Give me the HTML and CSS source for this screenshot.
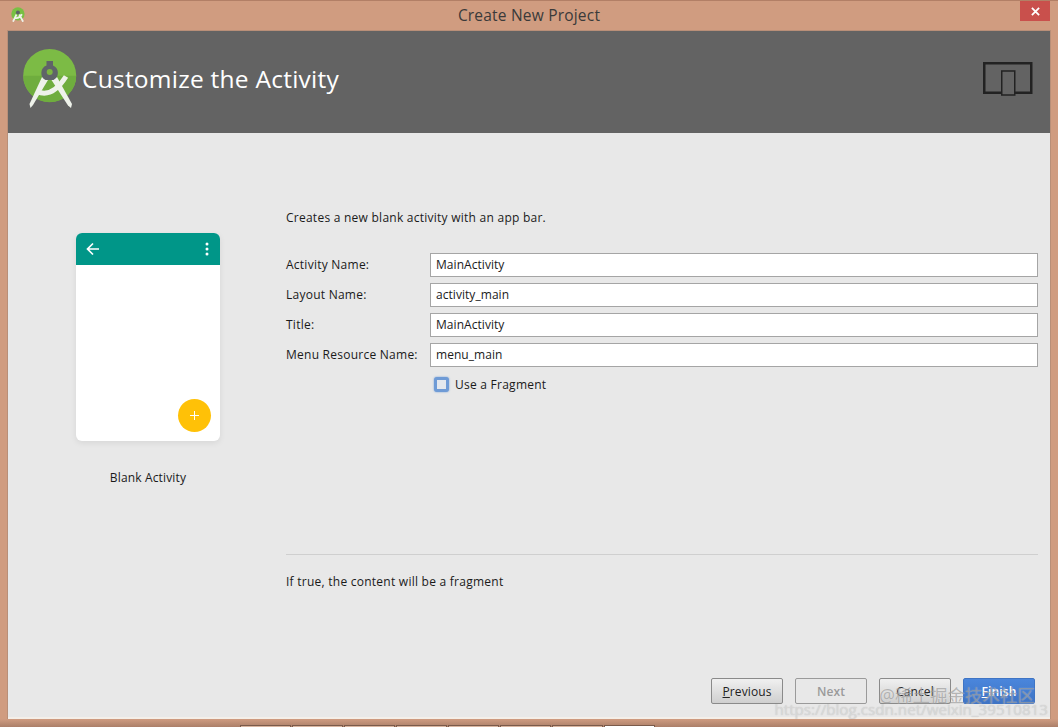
FILE: index.html
```html
<!DOCTYPE html>
<html lang="en">
<head>
<meta charset="utf-8">
<title>Create New Project</title>
<link rel="stylesheet" href="styles.css">
</head>
<body>
<div class="window">
  <div class="titlebar">
    <svg class="app-icon" viewBox="0 0 56 62" width="14" height="15.500">
      <circle cx="27.700" cy="27.500" r="26.500" fill="#78c043"/>
      <circle cx="27.700" cy="22" r="8" fill="#5f6368"/>
      <path d="M22 30 8 59M33 30l15.500 29M15 43q15 7 29-14" fill="none" stroke="#eef2ea" stroke-width="7"/>
    </svg>
    <span class="title-text">Create New Project</span>
    <div class="close"><svg viewBox="0 0 10 10" width="9" height="9"><path d="M1 1 9 9M9 1 1 9" stroke="#fff" stroke-width="2"/></svg></div>
  </div>
  <div class="main">
    <header class="header">
      <svg class="logo" viewBox="0 0 56 62" width="56" height="62">
        <circle cx="27.700" cy="27.500" r="26.500" fill="#7cbb45"/>
        <path d="M1.200 27.700a26.500 26.500 0 0 0 53 0z" fill="#6fad3e"/>
        <path d="M15 43.500q15 7 29-15" fill="none" stroke="#eef2ea" stroke-width="5"/>
        <path d="M20 29 26 32 11 57 8.500 60 7.500 56z" fill="#eef2ea"/>
        <path d="M35 29 29.500 32 46 57.500 49 60 50 56z" fill="#eef2ea"/>
        <path d="M24.500 13h6.500v4.500a8 8 0 0 1 .5 14.500h-8a8 8 0 0 1 1-14.500z" fill="#5f6368"/>
        <circle cx="27.700" cy="24" r="3" fill="#7cb342"/>
      </svg>
      <h1 class="heading">Customize the Activity</h1>
      <svg class="devices" viewBox="0 0 50 34" width="50" height="34">
        <rect x="1.250" y="1.250" width="47" height="29.500" fill="none" stroke="#222" stroke-width="2.500"/>
        <rect x="18.750" y="9" width="13" height="24" fill="#646464" stroke="#222" stroke-width="1.500"/>
      </svg>
    </header>
    <div class="content">
      <aside class="preview">
        <div class="phone">
          <div class="appbar">
            <svg viewBox="0 0 14 14" width="14" height="14"><path d="M13 7H2M7 1.500 1.500 7 7 12.500" fill="none" stroke="#fff" stroke-width="1.700"/></svg>
            <svg viewBox="0 0 4 14" width="4" height="14"><circle cx="2" cy="2" r="1.500" fill="#fff"/><circle cx="2" cy="7" r="1.500" fill="#fff"/><circle cx="2" cy="12" r="1.500" fill="#fff"/></svg>
          </div>
          <div class="phone-body">
            <div class="fab"><svg viewBox="0 0 9 9" width="9" height="9"><path d="M4.500 0v9M0 4.500h9" stroke="#fff" stroke-width="1"/></svg></div>
          </div>
        </div>
        <div class="preview-label">Blank Activity</div>
      </aside>
      <section class="form">
        <p class="desc">Creates a new blank activity with an app bar.</p>
        <div class="fields">
          <label class="field-label">Activity Name:</label><div class="input">MainActivity</div>
          <label class="field-label">Layout Name:</label><div class="input">activity_main</div>
          <label class="field-label">Title:</label><div class="input">MainActivity</div>
          <label class="field-label">Menu Resource Name:</label><div class="input">menu_main</div>
          <div></div>
          <div class="check-row"><span class="checkbox"></span><span>Use a Fragment</span></div>
        </div>
        <div class="help">If true, the content will be a fragment</div>
      </section>
    </div>
    <footer class="footer">
      <div class="btn"><span><u>P</u>revious</span></div>
      <div class="btn btn-disabled">Next</div>
      <div class="btn">Cancel</div>
      <div class="btn btn-primary"><span><u>F</u>inish</span></div>
    </footer>
  </div>
  <div class="taskbar">
    <span class="task"></span><span class="task"></span><span class="task"></span><span class="task"></span><span class="task"></span><span class="task"></span><span class="task"></span><span class="task task-on"></span>
  </div>
</div>
<div class="watermark"><span class="wm-top">@稀土掘金技术社区</span><span class="wm-url">https://blog.csdn.net/weixin_39510813</span></div>
</body>
</html>
```
FILE: styles.css
```css
* { box-sizing: border-box; }
html, body { margin: 0; height: 100%; }
body {
  width: 1058px;
  height: 727px;
  overflow: hidden;
  position: relative;
  background: #d09c80;
  font-family: "Open Sans", "Noto Sans CJK SC", sans-serif;
  font-size: 12px;
  letter-spacing: .25px;
  color: #1a1a1a;
}
.window {
  height: 727px;
  display: flex;
  flex-direction: column;
  border-top: 1px solid #b27f66;
}
.titlebar {
  height: 30px;
  flex: none;
  display: flex;
  align-items: center;
  position: relative;
  padding-left: 11px;
}
.app-icon { flex: none; margin-top: -3px; }
.title-text {
  position: absolute;
  left: 0;
  right: 0;
  text-align: center;
  font-size: 15.500px;
  letter-spacing: .2px;
  color: #3a3a3a;
  top: 3px;
}
.close {
  position: absolute;
  top: 0;
  right: 8px;
  width: 30px;
  height: 20px;
  background: #c9504c;
  display: flex;
  align-items: center;
  justify-content: center;
  z-index: 1;
}
.main {
  flex: 1;
  margin: 0 8px;
  display: flex;
  flex-direction: column;
  background: #e8e8e8;
  border-bottom: 2px solid #f4efe9;
  box-shadow: 0 0 0 1px #b98f78;
}
.header {
  height: 102px;
  flex: none;
  background: #636363;
  display: flex;
  align-items: center;
  padding: 0 17px 0 14px;
}
.logo { flex: none; margin-top: -6px; }
.heading {
  flex: 1;
  margin: -8px 0 0 4px;
  font-size: 24.500px;
  font-weight: 400;
  letter-spacing: .25px;
  color: #fff;
}
.devices { flex: none; margin-top: -7px; }
.content {
  flex: 1;
  display: flex;
  padding-top: 76px;
  min-height: 0;
}
.preview {
  width: 278px;
  flex: none;
  padding: 24px 0 0 68px;
}
.phone {
  width: 144px;
  height: 208px;
  border-radius: 6px;
  overflow: hidden;
  background: #fff;
  box-shadow: 0 2px 6px rgba(0,0,0,.08);
  display: flex;
  flex-direction: column;
}
.appbar {
  height: 32px;
  flex: none;
  background: #009688;
  display: flex;
  align-items: center;
  justify-content: space-between;
  padding: 0 11px 0 10px;
}
.phone-body {
  flex: 1;
  display: flex;
  align-items: flex-end;
  justify-content: flex-end;
  padding: 0 9px 9px 0;
}
.fab {
  width: 33px;
  height: 33px;
  border-radius: 50%;
  background: #ffc107;
  display: flex;
  align-items: center;
  justify-content: center;
}
.preview-label {
  width: 144px;
  margin-top: 28px;
  text-align: center;
  line-height: 17px;
  letter-spacing: .15px;
}
.form {
  flex: 1;
  margin-right: 12px;
  display: flex;
  flex-direction: column;
}
.desc {
  margin: 0 0 27px;
  line-height: 17px;
}
.fields {
  display: grid;
  grid-template-columns: 144px 1fr;
  grid-auto-rows: 24px;
  row-gap: 6px;
  align-items: center;
}
.field-label { padding-bottom: 1px; }
.input {
  height: 24px;
  background: #fff;
  border: 1px solid #a5a5a5;
  padding-left: 5px;
  line-height: 22px;
  letter-spacing: .05px;
}
.check-row {
  display: flex;
  align-items: center;
  gap: 6px;
  padding-left: 4px;
  margin-bottom: 2px;
}
.checkbox {
  width: 15px;
  height: 15px;
  border-radius: 3px;
  border: 3px solid #6f9bd6;
  background: #e4e8ee;
  box-shadow: 0 0 2px #6f9bd6;
}
.help {
  margin-top: 157px;
  border-top: 1px solid #cfcfcf;
  padding-top: 18px;
  line-height: 17px;
}
.footer {
  flex: none;
  display: flex;
  justify-content: flex-end;
  gap: 12px;
  padding: 0 15px 13px 0;
}
.btn {
  width: 72px;
  height: 26px;
  border: 1px solid #8a8a8a;
  border-radius: 2px;
  background: linear-gradient(#f0f0f0, #cfcfcf);
  display: flex;
  align-items: center;
  justify-content: center;
  color: #222;
  letter-spacing: .1px;
}
.btn-disabled {
  background: #e8e8e8;
  border-color: #9a9a9a;
  color: #9a9a9a;
  font-weight: 600;
}
.btn-primary {
  background: linear-gradient(#4a86dc, #3f74c4);
  border-color: #3f74c4;
  color: #fff;
  font-weight: 600;
}
.taskbar {
  height: 8px;
  flex: none;
  display: flex;
  align-items: flex-end;
  gap: 1px;
  padding-left: 240px;
  background: linear-gradient(#cf9c81, #ab7f69);
}
.task {
  width: 51px;
  height: 2px;
  background: #d9b5a0;
  border: 1px solid #7a5a4a;
  border-bottom: 0;
}
.task-on { background: #fff; }
.watermark {
  position: absolute;
  right: 10px;
  bottom: 11px;
  display: flex;
  flex-direction: column;
  align-items: flex-end;
  pointer-events: none;
  letter-spacing: 0;
}
.wm-top {
  font-size: 17.500px;
  line-height: 14px;
  margin-right: 13px;
  color: rgba(120,120,120,.5);
  text-shadow: 0 0 1px rgba(255,255,255,.5);
}
.wm-url {
  font-size: 15.200px;
  line-height: 14px;
  color: rgba(225,225,225,.7);
  text-shadow: 0 0 1px rgba(120,120,120,.4);
}
```
